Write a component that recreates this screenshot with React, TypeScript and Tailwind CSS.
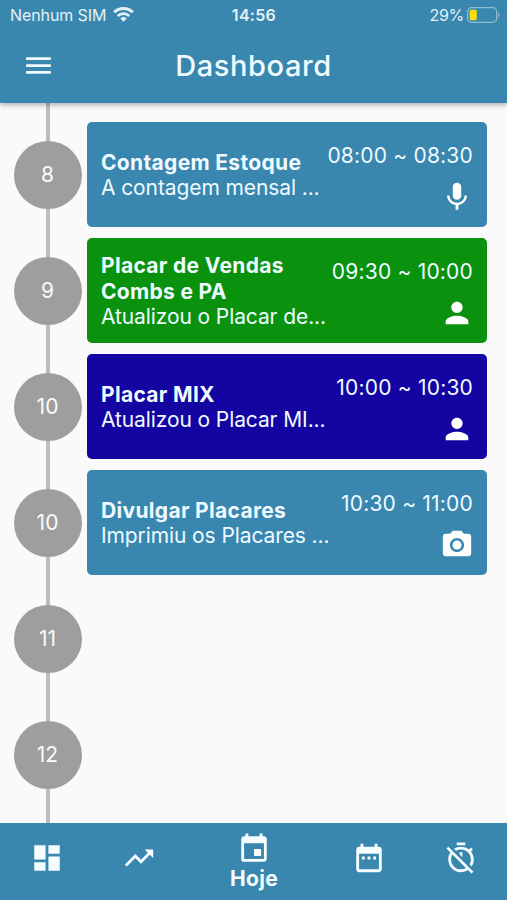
import clsx from "clsx";
import type { ComponentType } from "react";
import {
  MdCameraAlt,
  MdDashboard,
  MdDateRange,
  MdEvent,
  MdMenu,
  MdPerson,
  MdTrendingUp,
} from "react-icons/md";

type IconComponent = ComponentType<{ className?: string }>;

type Task = {
  title: string;
  description: string;
  time: string;
  color: string;
  icon: IconComponent;
};

type Slot = {
  hour: number;
  task?: Task;
};

const MicIcon = ({ className }: { className?: string }) => (
  <svg viewBox="0 0 24 24" fill="currentColor" className={className}>
    <path d="M12 14c1.66 0 2.99-1.34 2.99-3L15 5c0-1.66-1.34-3-3-3S9 3.34 9 5v6c0 1.66 1.34 3 3 3zm5.3-3c0 3-2.54 5.1-5.3 5.1S6.7 14 6.7 11H5c0 3.41 2.72 6.23 6 6.72V21h2v-3.28c3.28-.48 6-3.3 6-6.72h-1.7z" />
  </svg>
);

const TimerOffIcon = ({ className }: { className?: string }) => (
  <svg viewBox="0 0 24 24" fill="currentColor" className={className}>
    <path d="M19.04 4.55l-1.42 1.42C16.07 4.74 14.12 4 12 4c-1.83 0-3.53.55-4.95 1.48l1.46 1.46C9.53 6.35 10.73 6 12 6c3.87 0 7 3.13 7 7 0 1.27-.35 2.47-.94 3.49l1.45 1.45C20.45 16.53 21 14.83 21 13c0-2.12-.74-4.07-1.97-5.61l1.42-1.42-1.41-1.42zM15 1H9v2h6V1zm-4 8.44l2 2V8h-2v1.44zM3.02 4L1.75 5.27 4.5 8.03C3.55 9.45 3 11.16 3 13c0 4.97 4.02 9 9 9 1.84 0 3.55-.55 4.98-1.5l2.5 2.5 1.27-1.27-7.71-7.71L3.02 4zM12 20c-3.87 0-7-3.13-7-7 0-1.28.35-2.48.95-3.52l9.56 9.56c-1.03.61-2.23.96-3.51.96z" />
  </svg>
);

const slots: Slot[] = [
  {
    hour: 8,
    task: {
      title: "Contagem Estoque",
      description: "A contagem mensal ...",
      time: "08:00 ~ 08:30",
      color: "bg-[#3987ae]",
      icon: MicIcon,
    },
  },
  {
    hour: 9,
    task: {
      title: "Placar de Vendas Combs e PA",
      description: "Atualizou o Placar de...",
      time: "09:30 ~ 10:00",
      color: "bg-[#0a920f]",
      icon: MdPerson,
    },
  },
  {
    hour: 10,
    task: {
      title: "Placar MIX",
      description: "Atualizou o Placar MI...",
      time: "10:00 ~ 10:30",
      color: "bg-[#1404a1]",
      icon: MdPerson,
    },
  },
  {
    hour: 10,
    task: {
      title: "Divulgar Placares",
      description: "Imprimiu os Placares ...",
      time: "10:30 ~ 11:00",
      color: "bg-[#3987ae]",
      icon: MdCameraAlt,
    },
  },
  { hour: 11 },
  { hour: 12 },
];

const tabs: { icon: IconComponent; label?: string }[] = [
  { icon: MdDashboard },
  { icon: MdTrendingUp },
  { icon: MdEvent, label: "Hoje" },
  { icon: MdDateRange },
  { icon: TimerOffIcon },
];

const WifiIcon = () => (
  <svg width="21" height="15" viewBox="0 0 21 15" fill="none">
    <path d="M1.2 5.3a13.4 13.4 0 0 1 18.6 0" stroke="currentColor" strokeWidth="2.9" />
    <path d="M4.7 8.9a8.4 8.4 0 0 1 11.6 0" stroke="currentColor" strokeWidth="2.7" />
    <path d="M10.5 14.8 7.3 11.5a4.7 4.7 0 0 1 6.4 0z" fill="currentColor" />
  </svg>
);

const BatteryIcon = () => (
  <svg width="33" height="16" viewBox="0 0 33 16" fill="none">
    <rect x="0.6" y="0.7" width="29" height="14.6" rx="3.8" stroke="#8fbdd3" strokeWidth="1.2" />
    <rect x="2.6" y="2.8" width="7.2" height="10.4" rx="1.6" fill="#fddc0a" />
    <path d="M31 5.4c1.7.5 1.7 4.7 0 5.2z" fill="#8fbdd3" />
  </svg>
);

const StatusBar = () => (
  <div className="grid h-[29px] grid-cols-3 items-center pr-[7px] pl-[10px] text-[16px] text-[#e3f2f8]">
    <div className="flex items-center gap-[7px]">
      <span className="tracking-[-0.1px] whitespace-nowrap">Nenhum SIM</span>
      <WifiIcon />
    </div>
    <span className="-ml-[2px] text-center font-semibold tracking-[0.3px]">
      14:56
    </span>
    <div className="flex items-center justify-end gap-[3px]">
      <span className="tracking-[-0.3px]">29%</span>
      <BatteryIcon />
    </div>
  </div>
);

const Header = () => (
  <header className="relative z-10 h-[103px] shrink-0 bg-[#3987ae] shadow-[0_2px_5px_rgba(0,0,0,0.3)]">
    <StatusBar />
    <div className="grid h-[74px] grid-cols-[1fr_auto_1fr] items-center">
      <MdMenu className="-mt-[1px] ml-[22px] size-[33px] text-[#effbff]" />
      <h1 className="text-[29px] font-medium tracking-[0.6px] text-[#effbff]">
        Dashboard
      </h1>
    </div>
  </header>
);

const TaskCard = ({ task }: { task: Task }) => {
  const Icon = task.icon;

  return (
    <div
      className={clsx(
        "mt-[5px] flex h-[105px] flex-1 justify-between rounded-[5px] px-[14px] text-[#eefaff]",
        task.color,
      )}
    >
      <div className="flex w-[230px] flex-col justify-center pt-[3px] text-[21px] leading-[26px]">
        <p className="w-[210px] font-bold tracking-[0.32px]">{task.title}</p>
        <p className="-mt-[1px] tracking-[-0.1px] whitespace-nowrap">
          {task.description}
        </p>
      </div>
      <div className="flex flex-col items-end justify-between pt-[21px] pb-[12.5px]">
        <span className="-ml-20 text-[21px] leading-[26px] tracking-[0.2px] whitespace-nowrap">
          {task.time}
        </span>
        <Icon className="-mr-[1px] size-[34px] text-white" />
      </div>
    </div>
  );
};

const TimelineRow = ({ slot }: { slot: Slot }) => (
  <div className="flex h-[116px] shrink-0 pr-5 pl-[14px]">
    <div className="mr-[5px] flex w-[68px] shrink-0 flex-col items-center">
      <div className="w-1 flex-1 bg-[#bdbdbd]" />
      <div className="flex size-[68px] items-center justify-center rounded-full bg-[#9e9e9e] pt-[1px] pr-[1px] text-[21px] text-[#fafafa]">
        {slot.hour}
      </div>
      <div className="w-1 flex-1 bg-[#bdbdbd]" />
    </div>
    {slot.task && <TaskCard task={slot.task} />}
  </div>
);

const BottomBar = () => (
  <nav className="flex h-[77px] shrink-0 items-center bg-[#3987ae] pb-[7px] pl-[1px] text-[#f6fdff]">
    {tabs.map(({ icon: Icon, label }, i) => (
      <button
        key={i}
        className={clsx(
          "flex flex-col items-center",
          label ? "w-[138px] pt-[7px]" : "flex-1",
        )}
      >
        <Icon className="size-[34px]" />
        {label && (
          <span className="text-[21px] leading-[25px] font-bold tracking-[0.3px]">
            {label}
          </span>
        )}
      </button>
    ))}
  </nav>
);

const App = () => {
  return (
    <div className="flex h-screen flex-col overflow-hidden bg-[#fafafa] font-['Inter',sans-serif]">
      <Header />
      <main className="flex flex-1 flex-col overflow-hidden">
        <div className="ml-[46px] h-[13.5px] w-1 shrink-0 bg-[#bdbdbd]" />
        {slots.map((slot, i) => (
          <TimelineRow key={i} slot={slot} />
        ))}
        <div className="ml-[46px] w-1 flex-1 bg-[#bdbdbd]" />
      </main>
      <BottomBar />
    </div>
  );
};

export default App;
